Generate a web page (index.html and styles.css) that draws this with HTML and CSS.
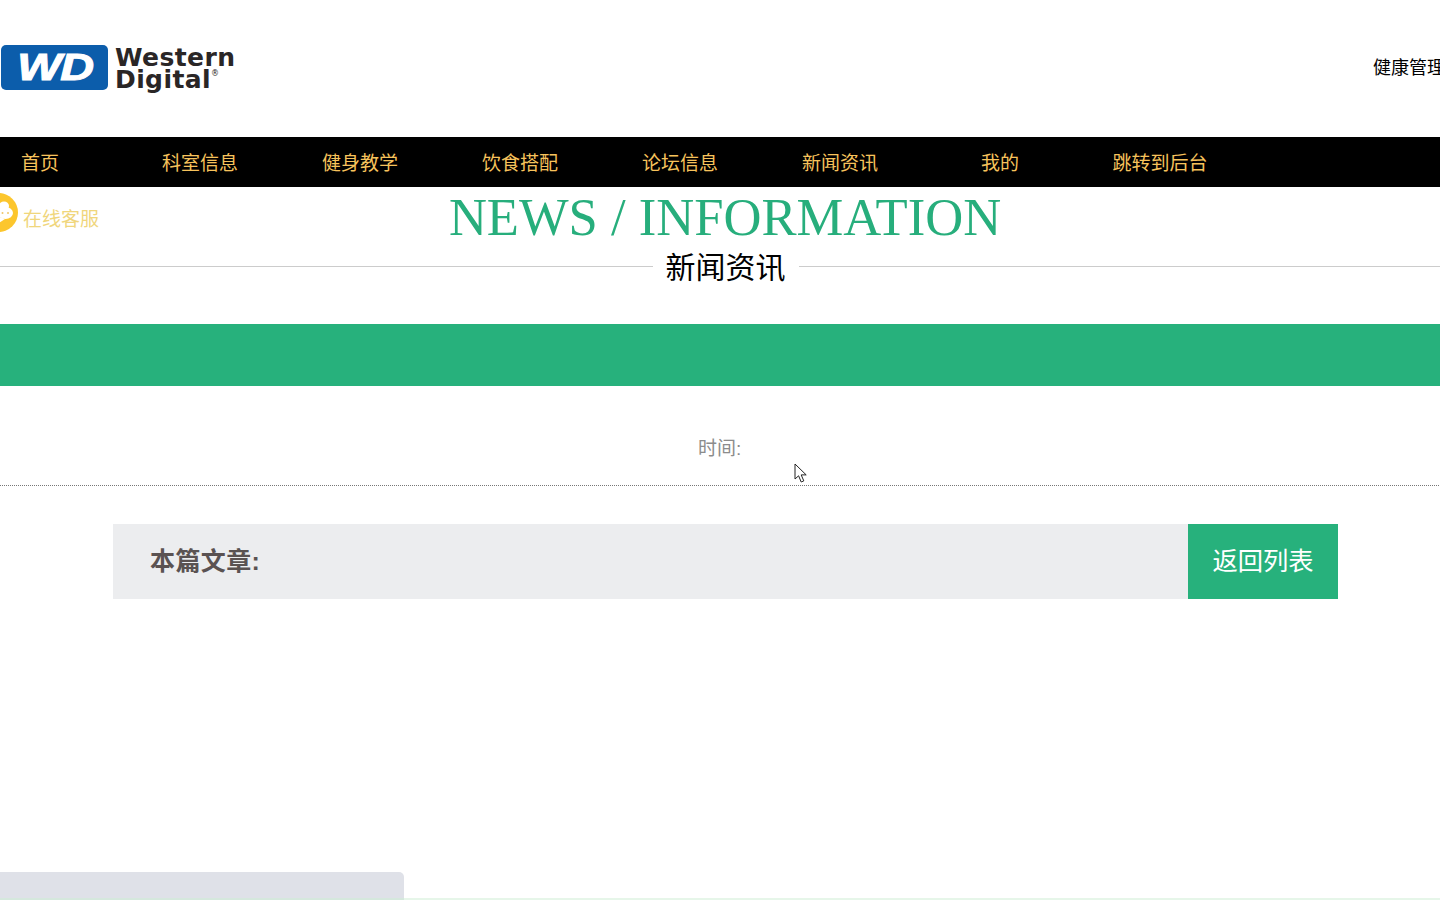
FILE: index.html
```html
<!DOCTYPE html>
<html lang="zh-CN">
<head>
<meta charset="utf-8">
<title>新闻资讯</title>
<link rel="stylesheet" href="styles.css">
</head>
<body>
<div class="page">
  <header class="top">
    <div class="logo">
      <div class="logo-badge"><span class="logo-wd">WD</span></div>
      <div class="logo-name"><span>Western</span><span>Digital<sup class="logo-r">®</sup></span></div>
    </div>
    <div class="top-link">健康管理</div>
  </header>
  <nav class="nav">
    <a class="nav-item">首页</a>
    <a class="nav-item">科室信息</a>
    <a class="nav-item">健身教学</a>
    <a class="nav-item">饮食搭配</a>
    <a class="nav-item">论坛信息</a>
    <a class="nav-item">新闻资讯</a>
    <a class="nav-item">我的</a>
    <a class="nav-item">跳转到后台</a>
  </nav>
  <main class="content">
    <div class="service">
      <svg class="service-icon" width="18" height="40" viewBox="0 0 18 40"><circle cx="-1.5" cy="19.5" r="19.5" fill="#fcc62d"/><ellipse cx="4" cy="13" rx="5" ry="4.5" fill="#fff"/><ellipse cx="5.5" cy="20" rx="7.5" ry="6" fill="#fff"/><path d="M0 24l-1 6 6-4z" fill="#fff"/><circle cx="2.5" cy="20" r="1" fill="#efc76a"/><circle cx="8" cy="20" r="1" fill="#efc76a"/></svg>
      <span class="service-text">在线客服</span>
    </div>
    <h1 class="title-en">NEWS / INFORMATION</h1>
    <div class="title-cn"><span>新闻资讯</span></div>
    <div class="band"></div>
    <div class="meta">时间:</div>
    <div class="article-bar">
      <div class="article-label">本篇文章:</div>
      <a class="back">返回列表</a>
    </div>
  </main>
  <svg class="cursor" width="14" height="21" viewBox="0 0 14 21"><path d="M1 1v15l3.6-3.2 2.6 6.2 2.6-1.1-2.6-6h5z" fill="#fff" stroke="#222" stroke-width="1"/></svg>
  <div class="foot-line"></div>
  <div class="foot-panel"></div>
</div>
</body>
</html>
```

FILE: styles.css
```css
html, body { margin: 0; padding: 0; height: 900px; overflow: hidden; background: #fff; }
body { font-family: "Liberation Sans", "Noto Sans CJK SC", sans-serif; color: #000; }
.page { position: relative; width: 1451px; height: 900px; overflow: hidden; }
.top { height: 137px; display: flex; align-items: center; justify-content: space-between; box-sizing: border-box; padding: 0 0 2px 1px; }
.logo { display: flex; align-items: center; gap: 7px; }
.logo-badge { width: 107px; height: 45px; background: #0c5dab; border-radius: 5px; display: flex; align-items: center; justify-content: center; }
.logo-wd { font: italic bold 36px/45px "Liberation Sans", sans-serif; color: #fff; -webkit-text-stroke: 1px #fff; letter-spacing: -1px; transform: scaleX(1.3); }
.logo-name { display: flex; flex-direction: column; padding-top: 2px; font: bold 25px/22px "DejaVu Sans", sans-serif; letter-spacing: 0.4px; color: #2a2626; }
.logo-r { font-size: 8px; line-height: 0; vertical-align: 12px; font-weight: normal; }
.top-link { font-size: 18px; line-height: 24px; width: 78px; white-space: nowrap; }
.nav { height: 50px; background: #000; display: flex; margin: 0 0 0 -40px; width: 1491px; }
.nav-item { width: 160px; text-align: center; font-size: 19px; line-height: 54px; height: 50px; color: #f7c35c; }
.content { position: relative; }
.service { position: absolute; left: 0; top: 6px; display: flex; align-items: flex-start; gap: 5px; }
.service-icon { display: block; }
.service-text { font-size: 19px; line-height: 54px; color: #f0d67c; }
.title-en { margin: 0; padding-right: 1px; text-align: center; font: normal 52.6px/60px "Liberation Serif", serif; color: #27ae7c; }
.title-cn { height: 57px; margin-top: 1px; display: flex; justify-content: center; align-items: flex-start; background: linear-gradient(#ccc, #ccc) no-repeat 0 18px / 100% 1px; }
.title-cn span { background: #fff; padding: 0 13px; font-size: 30px; line-height: 40px; }
.band { height: 62px; margin-top: 19px; background: #27b17c; }
.meta { height: 100px; box-sizing: border-box; padding: 51px 0 0 698px; border-bottom: 1px dotted #777; font-size: 19px; line-height: 24px; color: #8c8c8c; }
.article-bar { margin: 38px 0 0 113px; width: 1225px; height: 75px; display: flex; background: #ecedef; }
.article-label { flex: 1; padding-left: 37px; font-size: 25px; font-weight: bold; line-height: 75px; letter-spacing: 0.4px; color: #5a5252; }
.back { width: 150px; background: #27b17c; color: #fff; text-align: center; font-size: 25.3px; line-height: 75px; }
.cursor { position: absolute; left: 794px; top: 463px; }
.foot-line { position: absolute; left: 0; right: 0; bottom: 0; height: 2px; background: #e6f6e9; }
.foot-panel { position: absolute; left: 0; top: 872px; width: 404px; height: 28px; background: #dfe1e8; border-top-right-radius: 5px; box-shadow: inset 0 -2px 0 #d5e8dd; }
```
